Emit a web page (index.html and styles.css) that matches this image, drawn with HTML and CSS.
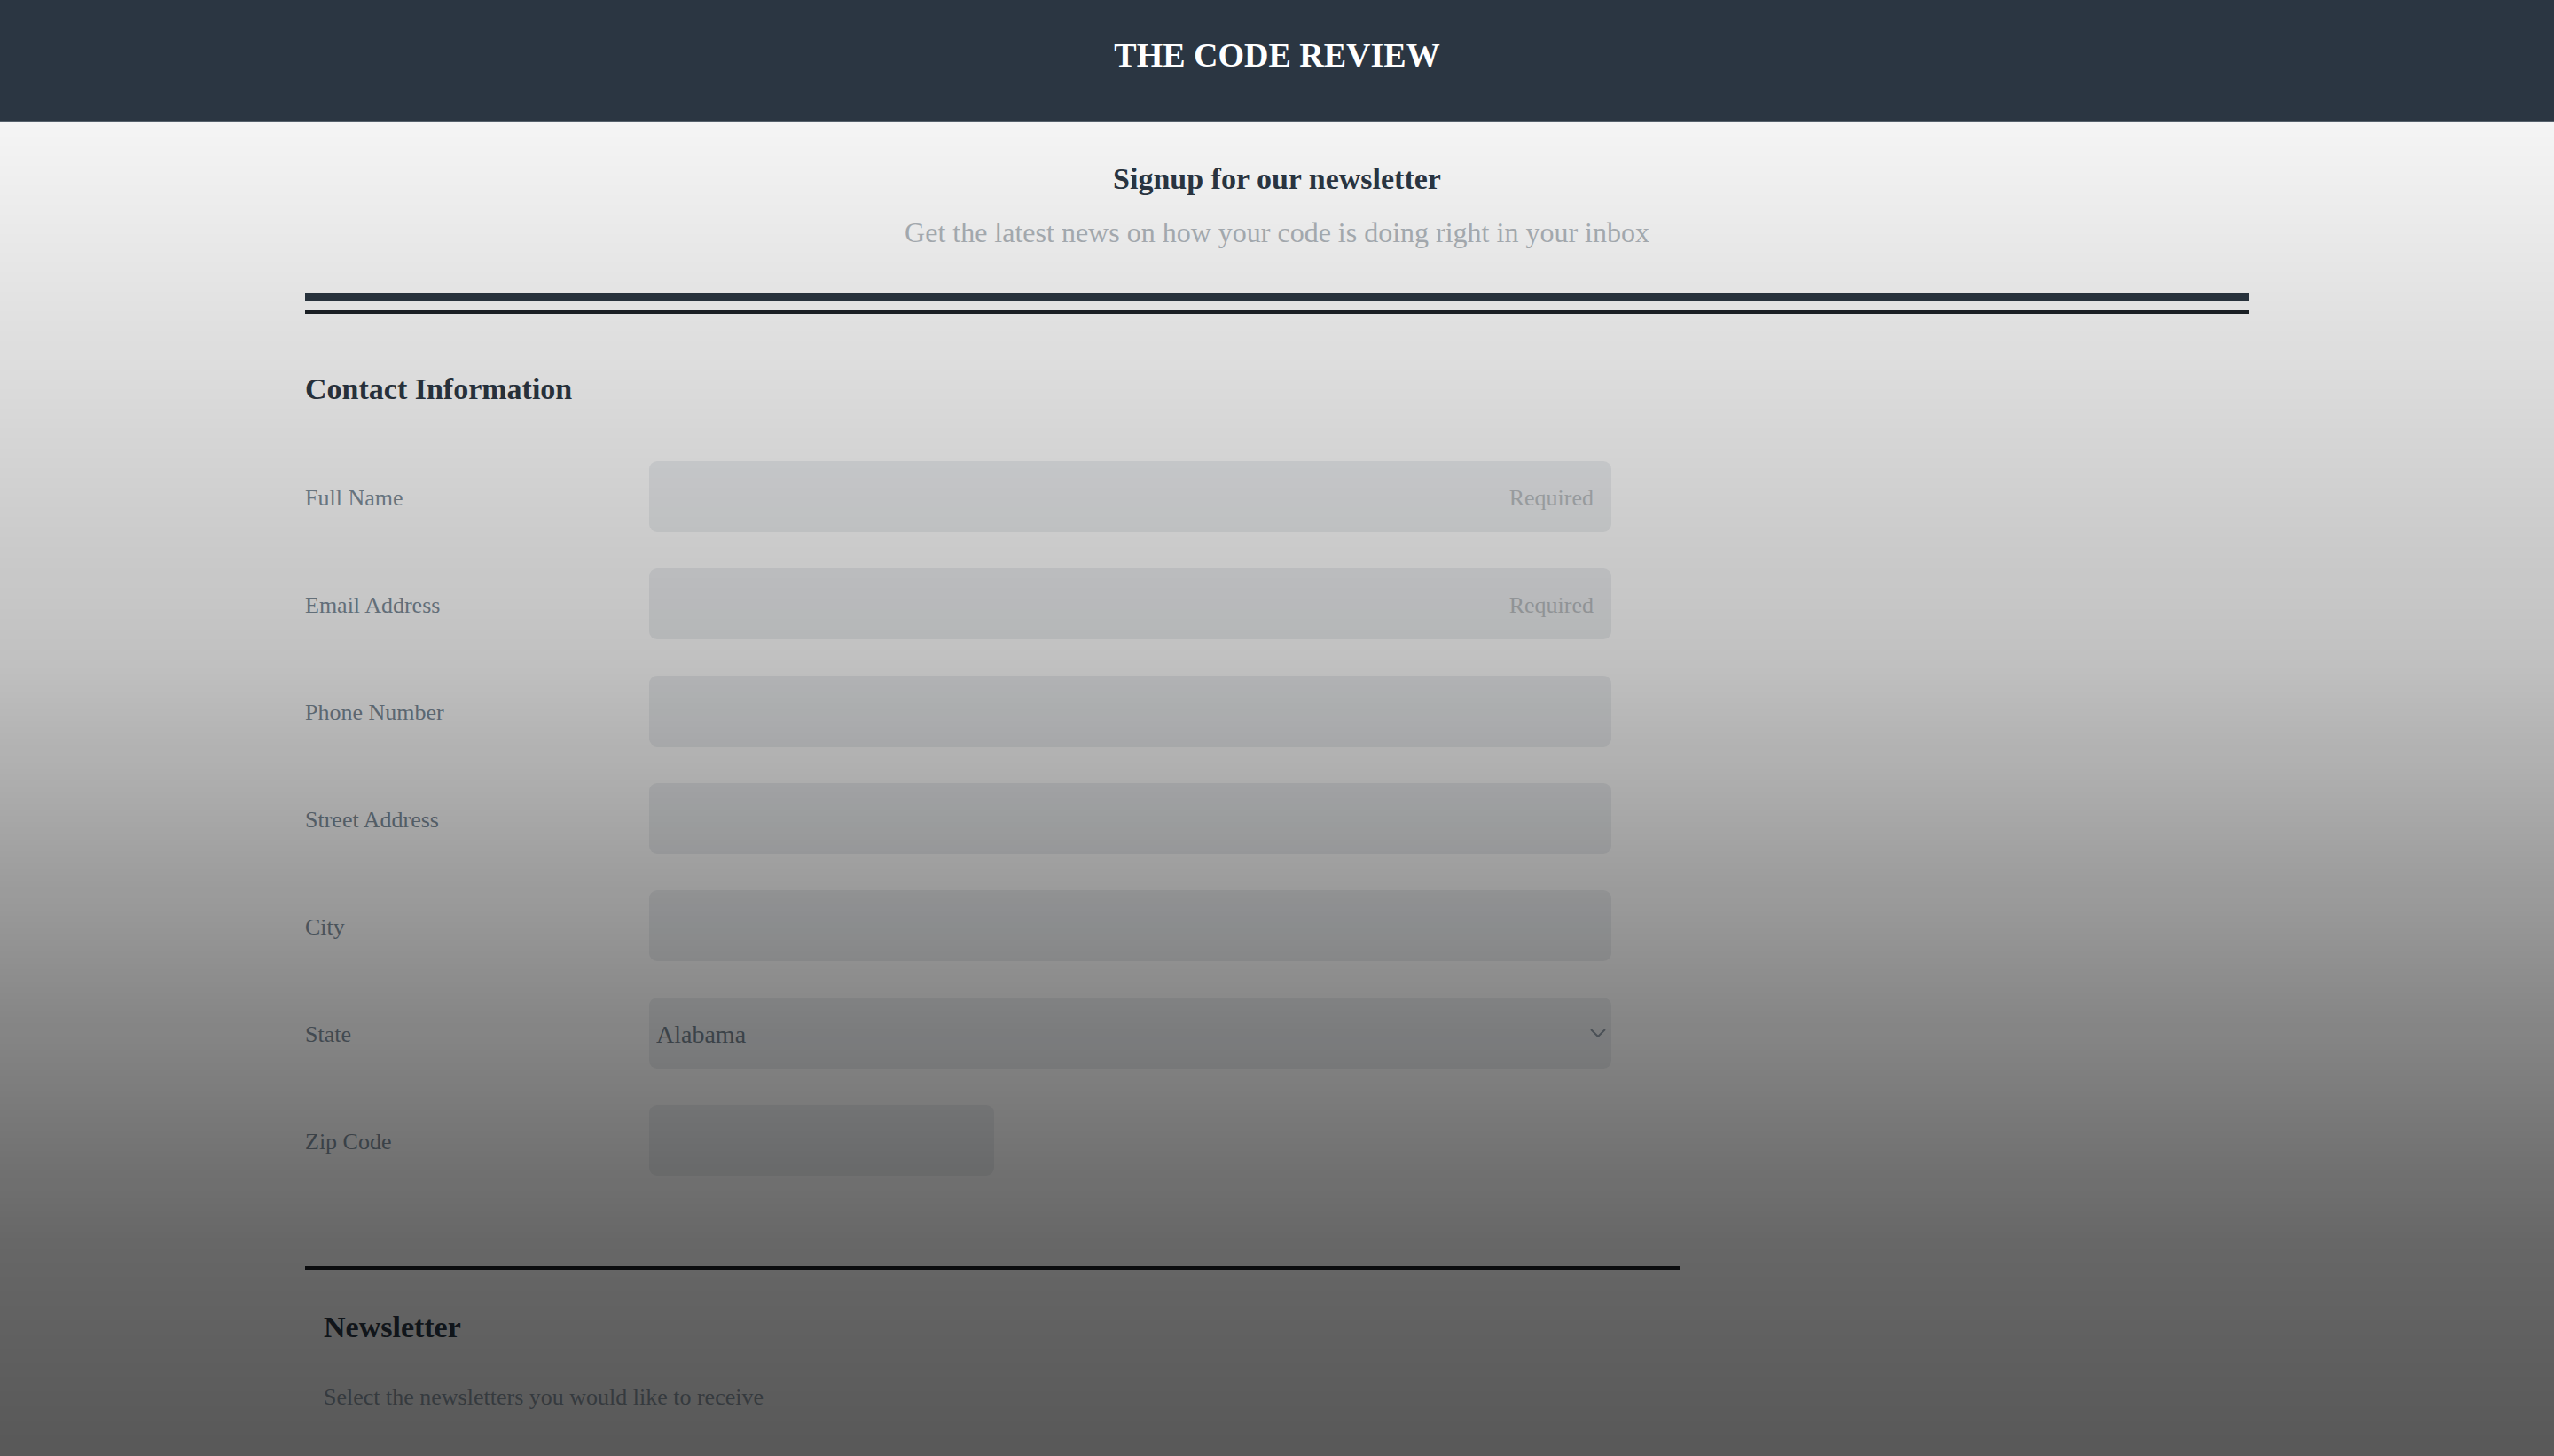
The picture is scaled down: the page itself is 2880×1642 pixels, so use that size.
FILE: index.html
```html
<!DOCTYPE html>
<html lang="en">
<head>
<meta charset="utf-8">
<title>The Code Review - Newsletter Signup</title>
<link rel="stylesheet" href="styles.css">
</head>
<body>
<header class="site-header">
  <div class="brand">THE CODE REVIEW</div>
</header>
<main class="page">
  <section class="hero">
    <h1 class="hero-title">Signup for our newsletter</h1>
    <p class="hero-sub">Get the latest news on how your code is doing right in your inbox</p>
  </section>
  <div class="double-rule"></div>
  <form class="signup-form">
    <h2 class="section-title">Contact Information</h2>
    <div class="fields">
      <label class="field-label" for="fullname">Full Name</label>
      <input class="field-input req" id="fullname" type="text" placeholder="Required">
      <label class="field-label" for="email">Email Address</label>
      <input class="field-input req" id="email" type="email" placeholder="Required">
      <label class="field-label" for="phone">Phone Number</label>
      <input class="field-input" id="phone" type="tel">
      <label class="field-label" for="street">Street Address</label>
      <input class="field-input" id="street" type="text">
      <label class="field-label" for="city">City</label>
      <input class="field-input" id="city" type="text">
      <label class="field-label" for="state">State</label>
      <div class="select-wrap">
        <select class="field-select" id="state">
          <option>Alabama</option>
          <option>Alaska</option>
          <option>Arizona</option>
        </select>
        <svg class="chevron" width="18" height="10" viewBox="0 0 18 10"><polyline points="1,1 9,9 17,1" fill="none" stroke="currentColor" stroke-width="2"/></svg>
      </div>
      <label class="field-label" for="zip">Zip Code</label>
      <input class="field-input zip" id="zip" type="text">
    </div>
    <div class="newsletter">
      <h2 class="section-title">Newsletter</h2>
      <p class="newsletter-desc">Select the newsletters you would like to receive</p>
    </div>
  </form>
</main>
<div class="shade"></div>
</body>
</html>
```
FILE: styles.css
```css
html, body {
  margin: 0;
  padding: 0;
}
body {
  background: #f5f5f5;
  font-family: "Liberation Serif", "DejaVu Serif", serif;
  min-height: 100vh;
  overflow: hidden;
}
.site-header {
  box-sizing: border-box;
  height: 138px;
  padding-top: 40px;
  background: #2b3642;
  border-bottom: 1px solid #56616c;
  text-align: center;
}
.brand {
  color: #ffffff;
  font-weight: bold;
  font-size: 38px;
  line-height: 1.2;
}
.page {
  width: 2192px;
  margin: 0 auto;
}
.hero {
  text-align: center;
  padding-top: 44px;
}
.hero-title {
  margin: 0;
  font-size: 34px;
  line-height: 1.2;
  font-weight: bold;
  color: #2b3642;
}
.hero-sub {
  margin: 20px 0 0;
  font-size: 32px;
  line-height: 1.2;
  color: #aab0b5;
}
.double-rule {
  margin-top: 49px;
  height: 10px;
  border-top: 10px solid #2b3540;
  border-bottom: 4px solid #1d2228;
}
.signup-form {
  width: 1551px;
  padding-bottom: 80px;
}
.section-title {
  margin: 65px 0 0;
  font-size: 34px;
  line-height: 1.2;
  font-weight: bold;
  color: #2b3642;
}
.fields {
  margin-top: 60px;
  display: grid;
  grid-template-columns: 388px 1085px;
  grid-auto-rows: 80px;
  row-gap: 41px;
  align-items: center;
  padding-bottom: 102px;
  border-bottom: 4px solid #1c1f23;
}
.field-label {
  font-size: 26px;
  color: #7a8996;
  padding-top: 4px;
}
.field-input, .field-select {
  box-sizing: border-box;
  height: 80px;
  width: 100%;
  border: none;
  border-radius: 9px;
  background: #e4e6e8;
  font-family: inherit;
  font-size: 26px;
  padding: 4px 20px 0;
  outline: none;
}
.field-input.req {
  text-align: right;
}
.field-input::placeholder {
  color: #b3b7ba;
}
.field-input.zip {
  width: 389px;
}
.select-wrap {
  position: relative;
  height: 80px;
}
.field-select {
  appearance: none;
  -webkit-appearance: none;
  padding: 3px 8px 0;
  font-size: 28px;
  color: #6f7c87;
}
.chevron {
  position: absolute;
  right: 6px;
  top: 35px;
  color: #8a949f;
}
.newsletter {
  padding-left: 21px;
}
.newsletter .section-title {
  margin-top: 45px;
}
.newsletter-desc {
  margin: 42px 0 0;
  font-size: 26px;
  line-height: 1.2;
  color: #8e9aa6;
}
.shade {
  position: fixed;
  left: 0;
  right: 0;
  top: 138px;
  bottom: 0;
  pointer-events: none;
  background: linear-gradient(to bottom,
    rgba(0,0,0,0) 0px,
    rgba(0,0,0,0.094) 262px,
    rgba(0,0,0,0.163) 462px,
    rgba(0,0,0,0.216) 612px,
    rgba(0,0,0,0.45) 1012px,
    rgba(0,0,0,0.58) 1262px,
    rgba(0,0,0,0.64) 1504px);
}
```
